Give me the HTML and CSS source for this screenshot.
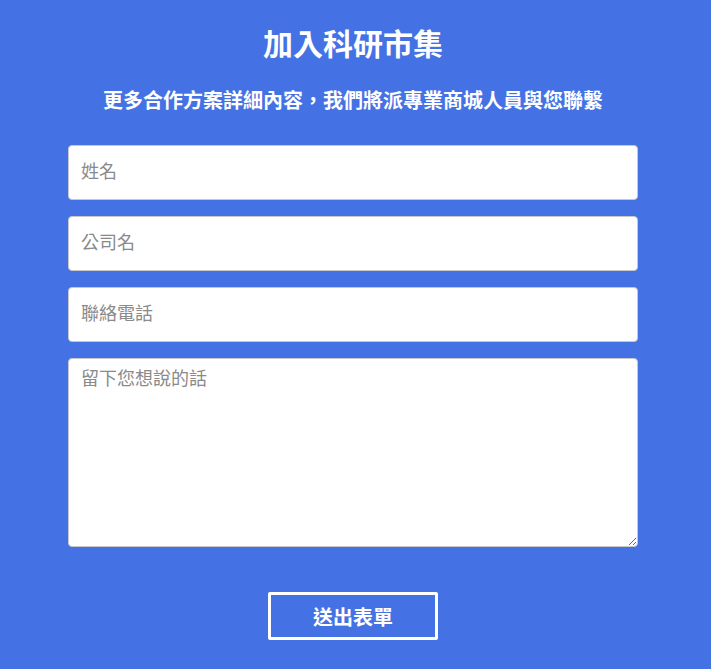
FILE: index.html
```html
<!DOCTYPE html>
<html lang="zh-Hant">
<head>
  <meta charset="UTF-8">
  <title>加入科研市集</title>
  <link rel="stylesheet" href="styles.css">
</head>
<body>
  <div class="join">
    <h1 class="join-title">加入科研市集</h1>
    <p class="join-sub">更多合作方案詳細內容，我們將派專業商城人員與您聯繫</p>
    <form class="join-form">
      <input class="field" type="text" placeholder="姓名">
      <input class="field" type="text" placeholder="公司名">
      <input class="field" type="text" placeholder="聯絡電話">
      <textarea class="field field-msg" placeholder="留下您想說的話"></textarea>
      <button type="button" class="submit">送出表單</button>
    </form>
  </div>
</body>
</html>
```

FILE: styles.css
```css
body {
  margin: 0;
  padding: 0 5px 0 0;
  background: #4472e4;
  font-family: "Liberation Sans", "Noto Sans CJK TC", sans-serif;
  color: #fff;
}
.join {
  width: 570px;
  margin: 0 auto;
  padding-top: 27px;
}
.join-title {
  margin: 0;
  font-size: 30px;
  line-height: 36px;
  text-align: center;
  font-weight: bold;
}
.join-sub {
  margin: 26px 0 0;
  font-size: 20px;
  line-height: 24px;
  text-align: center;
  font-weight: bold;
}
.join-form {
  margin-top: 32px;
  display: flex;
  flex-direction: column;
  gap: 16px;
}
.field {
  box-sizing: border-box;
  width: 100%;
  height: 55px;
  padding: 0 12px;
  border: 1px solid #c8c8c8;
  border-radius: 4px;
  background: #fff;
  font-family: "Liberation Sans", "Noto Sans CJK TC", sans-serif;
  font-size: 18px;
  color: #333;
  outline: none;
}
.field::placeholder {
  color: #8a8a8a;
}
.field-msg {
  height: 189px;
  padding-top: 5px;
  resize: vertical;
  display: block;
}
.submit {
  align-self: center;
  margin-top: 29px;
  width: 170px;
  height: 48px;
  border: 3px solid #fff;
  border-radius: 2px;
  background: transparent;
  color: #fff;
  font-family: "Liberation Sans", "Noto Sans CJK TC", sans-serif;
  font-size: 20px;
  font-weight: bold;
  cursor: pointer;
}
```
